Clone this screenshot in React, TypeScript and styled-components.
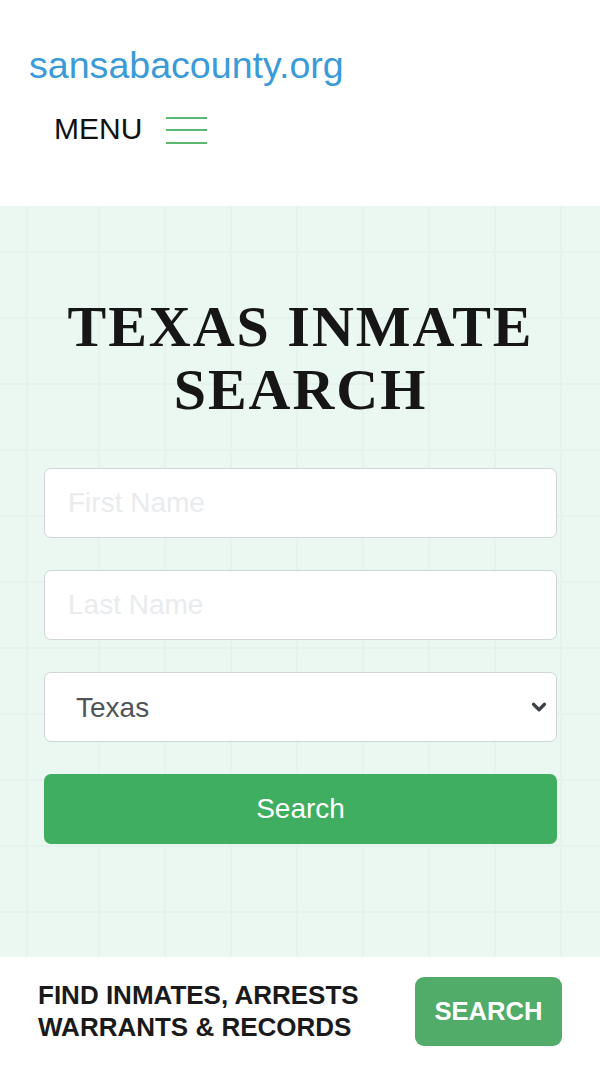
import React from 'react';
import styled, { createGlobalStyle } from 'styled-components';
import { ChevronDown } from 'lucide-react';

const GlobalStyle = createGlobalStyle`
  html, body {
    margin: 0;
    padding: 0;
    background: #ffffff;
  }

  body {
    font-family: "Liberation Sans", Arial, sans-serif;
  }

  * {
    box-sizing: border-box;
  }
`;

const Page = styled.div`
  display: flex;
  flex-direction: column;
  width: 600px;
  min-height: 1065px;
`;

const Header = styled.header`
  display: flex;
  flex-direction: column;
  height: 206px;
  padding: 44px 0 0 29px;
  background: #ffffff;
`;

const Logo = styled.a`
  font-size: 37.6px;
  line-height: 42px;
  color: #3b9ad8;
  text-decoration: none;
`;

const MenuRow = styled.div`
  display: flex;
  align-items: center;
  gap: 24px;
  margin: 27px 0 0 25px;
`;

const MenuLabel = styled.span`
  font-size: 30px;
  line-height: 32px;
  color: #111111;
`;

const Burger = styled.div`
  display: flex;
  flex-direction: column;
  gap: 10.5px;
  width: 41px;
  margin-top: 2px;
`;

const BurgerLine = styled.span`
  display: block;
  height: 2px;
  background: #5cb870;
`;

const Hero = styled.section`
  display: flex;
  flex-direction: column;
  align-items: center;
  height: 751px;
  padding: 89px 43px 0 44px;
  background-color: #ebf7f1;
  background-image:
    repeating-linear-gradient(90deg, transparent 0 64px, #e5f3ec 64px 66px),
    repeating-linear-gradient(0deg, transparent 0 64px, #e5f3ec 64px 66px);
  background-position: 34px 20px;
`;

const Title = styled.h1`
  margin: 0 0 47px;
  font-family: "Liberation Serif", "Times New Roman", serif;
  font-size: 58px;
  line-height: 63px;
  font-weight: 700;
  letter-spacing: 2px;
  text-align: center;
  color: #161616;
`;

const Form = styled.form`
  display: flex;
  flex-direction: column;
  gap: 32px;
  width: 100%;
`;

const TextInput = styled.input`
  width: 100%;
  height: 70px;
  padding: 0 23px;
  border: 1.5px solid #cfd5d9;
  border-radius: 7px;
  background: #ffffff;
  font-family: "Liberation Sans", Arial, sans-serif;
  font-size: 28px;
  color: #333333;
  outline: none;

  &::placeholder {
    color: #e9ecee;
  }
`;

const SelectWrap = styled.div`
  position: relative;
  width: 100%;
`;

const Select = styled.select`
  appearance: none;
  width: 100%;
  height: 70px;
  padding: 0 31px;
  border: 1.5px solid #cfd5d9;
  border-radius: 7px;
  background: #ffffff;
  font-family: "Liberation Sans", Arial, sans-serif;
  font-size: 28px;
  color: #4f5459;
  outline: none;
`;

const Chevron = styled.span`
  position: absolute;
  right: 7px;
  top: 50%;
  display: flex;
  transform: translateY(-50%);
  color: #3f4347;
  pointer-events: none;
`;

const SearchButton = styled.button`
  width: 100%;
  height: 70px;
  border: none;
  border-radius: 7px;
  background: #3fae60;
  font-family: "Liberation Sans", Arial, sans-serif;
  font-size: 28px;
  color: #ffffff;
  cursor: pointer;
`;

const BottomBar = styled.footer`
  display: flex;
  align-items: center;
  justify-content: space-between;
  height: 108px;
  padding: 0 38px;
  background: #ffffff;
`;

const BottomText = styled.p`
  margin: 0;
  font-size: 26px;
  line-height: 32px;
  font-weight: 700;
  color: #1a1a1a;
`;

const BottomButton = styled.button`
  width: 147px;
  height: 69px;
  border: none;
  border-radius: 9px;
  background: #52ac69;
  font-family: "Liberation Sans", Arial, sans-serif;
  font-size: 25.6px;
  font-weight: 700;
  color: #ffffff;
  cursor: pointer;
`;

const App = (): JSX.Element => (
  <Page>
    <GlobalStyle />
    <Header>
      <Logo href="#">sansabacounty.org</Logo>
      <MenuRow>
        <MenuLabel>MENU</MenuLabel>
        <Burger>
          <BurgerLine />
          <BurgerLine />
          <BurgerLine />
        </Burger>
      </MenuRow>
    </Header>

    <Hero>
      <Title>
        TEXAS INMATE
        <br />
        SEARCH
      </Title>
      <Form onSubmit={(e) => e.preventDefault()}>
        <TextInput type="text" placeholder="First Name" />
        <TextInput type="text" placeholder="Last Name" />
        <SelectWrap>
          <Select defaultValue="Texas">
            <option value="Texas">Texas</option>
          </Select>
          <Chevron>
            <ChevronDown size={22} strokeWidth={3.5} />
          </Chevron>
        </SelectWrap>
        <SearchButton type="submit">Search</SearchButton>
      </Form>
    </Hero>

    <BottomBar>
      <BottomText>
        FIND INMATES, ARRESTS
        <br />
        WARRANTS &amp; RECORDS
      </BottomText>
      <BottomButton type="button">SEARCH</BottomButton>
    </BottomBar>
  </Page>
);

export default App;
